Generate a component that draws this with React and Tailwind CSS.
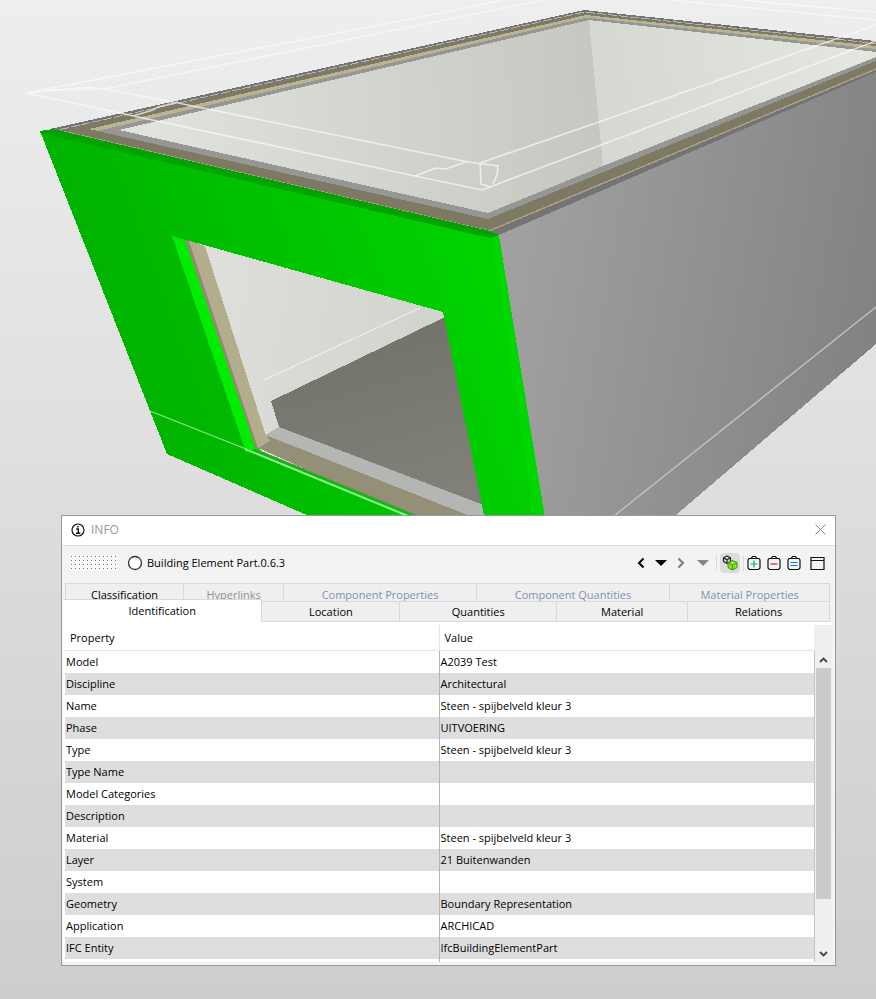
import React, { useState } from 'react'

const backTabs = [
  { label: 'Classification', className: 'grow-[118] text-black' },
  { label: 'Hyperlinks', className: 'grow-[100] text-[#909090]' },
  { label: 'Component Properties', className: 'grow-[193] text-[#7f8fb4]' },
  { label: 'Component Quantities', className: 'grow-[194] text-[#7f8fb4]' },
  { label: 'Material Properties', className: 'grow-[160] text-[#7f8fb4]' },
]

const frontTabs = [
  { label: 'Identification', className: 'grow-[200]' },
  { label: 'Location', className: 'grow-[138]' },
  { label: 'Quantities', className: 'grow-[157]' },
  { label: 'Material', className: 'grow-[131]' },
  { label: 'Relations', className: 'grow-[142]' },
]

const properties = [
  ['Model', 'A2039 Test'],
  ['Discipline', 'Architectural'],
  ['Name', 'Steen - spijbelveld kleur 3'],
  ['Phase', 'UITVOERING'],
  ['Type', 'Steen - spijbelveld kleur 3'],
  ['Type Name', ''],
  ['Model Categories', ''],
  ['Description', ''],
  ['Material', 'Steen - spijbelveld kleur 3'],
  ['Layer', '21 Buitenwanden'],
  ['System', ''],
  ['Geometry', 'Boundary Representation'],
  ['Application', 'ARCHICAD'],
  ['IFC Entity', 'IfcBuildingElementPart'],
  ['', ''],
]

function Scene() {
  return (
    <svg
      className="absolute inset-0 h-full w-full"
      viewBox="0 0 876 999"
      preserveAspectRatio="xMidYMin slice"
      aria-hidden="true"
    >
      <defs>
        <linearGradient id="wallLeft" gradientUnits="userSpaceOnUse" x1="150" y1="120" x2="600" y2="100">
          <stop offset="0" stopColor="#e0e3dc" />
          <stop offset="0.55" stopColor="#d1d3cd" />
          <stop offset="1" stopColor="#c5c7c0" />
        </linearGradient>
        <linearGradient id="wallRight" gradientUnits="userSpaceOnUse" x1="590" y1="100" x2="850" y2="50">
          <stop offset="0" stopColor="#d5d7d1" />
          <stop offset="1" stopColor="#e3e6df" />
        </linearGradient>
        <linearGradient id="sideFace" gradientUnits="userSpaceOnUse" x1="510" y1="300" x2="876" y2="360">
          <stop offset="0" stopColor="#a0a0a0" />
          <stop offset="1" stopColor="#828282" />
        </linearGradient>
        <linearGradient id="frontFace" gradientUnits="userSpaceOnUse" x1="120" y1="380" x2="480" y2="250">
          <stop offset="0" stopColor="#00b200" />
          <stop offset="1" stopColor="#00d200" />
        </linearGradient>
        <linearGradient id="roomWall" gradientUnits="userSpaceOnUse" x1="215" y1="290" x2="440" y2="340">
          <stop offset="0" stopColor="#dedfda" />
          <stop offset="1" stopColor="#d1d3cd" />
        </linearGradient>
        <linearGradient id="roomFloor" gradientUnits="userSpaceOnUse" x1="380" y1="340" x2="420" y2="490">
          <stop offset="0" stopColor="#74746c" />
          <stop offset="1" stopColor="#808078" />
        </linearGradient>
      </defs>

      <g shapeRendering="crispEdges">
        {/* wall layers seen from above, outermost first */}
        <path fill="#747474" d="M50 129 584 10 876 41V72L499 235 489 232Z" />
        <path fill="none" stroke="#b5b5b0" strokeDasharray="9 2" d="M60 129.500 584 12 876 43.500" />
        <path fill="#7d7962" d="M62 130 584 13 876 44V68L489 231Z" />
        <path fill="none" stroke="#aaa081" strokeWidth="1.500" d="M62 131 489 231 876 69" />
        <path fill="#b9b491" d="M89 129 586 15 876 46V54L600 30 120 136Z" />
        <path fill="#969794" d="M97 131 587 17.500 876 49V61L488 219Z" />
        <path fill="url(#wallLeft)" d="M119 130 589 20 603 166 488 213Z" />
        <path fill="url(#wallRight)" d="M589 20 876 52V57L603 166Z" />

        <path fill="url(#sideFace)" d="M499 235 876 72V344L676 515V530H545Z" />

        {/* room behind the opening */}
        <path fill="#00ec00" d="M165 225 195 235 262 455 240 455Z" />
        <path fill="url(#roomWall)" d="M200 235 450 305V325L275 403 281 430 266 437Z" />
        <path fill="url(#roomFloor)" d="M455 312 443 318 271 401 279 427 495 510Z" />
        <path fill="#b4b6b2" d="M264 436 279 427 481 504 490 507V516H468Z" />
        <path fill="#949078" d="M254 446 268 436 470 516H410Z" />

        {/* selected facade */}
        <path
          fill="url(#frontFace)"
          fillRule="evenodd"
          d="M40 131 491 235 499 236 547 530H341L167 454ZM172 236 246 452 256 449 417 515H484L443 312Z"
        />
        <path fill="#00db00" d="M491 237 499 235 547 530H536Z" opacity="0.550" />
        <path fill="#00a300" d="M40 131 53 129 490 231 499 235 490 238 40 133Z" />

        <path fill="#00ec00" d="M172 236 186 240 256 449 246 451Z" />
        <path fill="#938872" d="M185 240 190 241 260 447 256 449Z" />
        <path fill="#b3ad8d" d="M189 241 205 246 266 436 270 441 258 448Z" />
      </g>

      <path stroke="#c4c4c4" strokeWidth="1.300" d="M614 516 876 307" />
      <path stroke="#8c806a" d="M256 449.500 417 515.500" />
      <path stroke="#eef0ec" strokeWidth="1.200" d="M264 380 420 308" />
      <path fill="none" stroke="#8fe08c" strokeWidth="1.300" d="M150 411 246 449" />
      <path fill="none" stroke="#95ee92" strokeWidth="2" d="M245 449 408 516" />

      {/* roof outline drawn as wireframe */}
      <g fill="none" stroke="#fbfbfb" strokeWidth="1.600" opacity="0.700">
        <path d="M26 93 436 14 502 0" />
        <path d="M42 90 104 89 440 21 544 0" />
        <path d="M26 93 89 87 104 89 178 103 468 162 498 166 497 175 493 184" />
        <path d="M26 93 415 176 482 190 876 41" />
        <path d="M876 25 599 122 480 163 481 184 491 187" />
        <path d="M415 176 436 168 446 169 468 161" />
        <path d="M133 116 153 110 158 107 178 102" />
        <path d="M669 0 876 20M738 0 876 12" />
      </g>
    </svg>
  )
}

function BasketIcon({ color, children }) {
  return (
    <svg width="14" height="16" viewBox="0 0 14 16" fill="none" stroke="#111">
      <path strokeWidth="1.200" d="M2 3.500H12L13 5V13L11.500 14.500H2.500L1 13V5ZM4 3.500 5.500 1.500H8.500L10 3.500" />
      <g stroke={color} strokeWidth="1.200">{children}</g>
    </svg>
  )
}

function TitleBar() {
  return (
    <div className="flex h-[30px] items-center justify-between border-b border-[#dcdcdc] bg-white pb-[2px] pl-[9px] pr-2">
      <div className="flex items-center gap-[6px]">
        <svg width="14" height="14" viewBox="0 0 14 14" fill="none" stroke="#111">
          <circle cx="7" cy="7" r="6" strokeWidth="1.200" />
          <path strokeWidth="1.400" d="M5.300 6H7.300V10.300M5 10.300H9.300M6.200 3.700H7.700" />
        </svg>
        <h1 className="text-[12px] text-[#999]">INFO</h1>
      </div>
      <button type="button" aria-label="Close">
        <svg width="13" height="13" viewBox="0 0 13 13" stroke="#888">
          <path d="M1.500 1.500 11.500 11.500M11.500 1.500 1.500 11.500" />
        </svg>
      </button>
    </div>
  )
}

function Toolbar() {
  return (
    <div className="flex h-[37px] items-center justify-between pb-[3px] pl-2 pr-[10px]">
      <div className="flex items-center">
        <svg width="48" height="16" aria-hidden="true">
          <defs>
            <pattern id="grip" width="4" height="4" patternUnits="userSpaceOnUse">
              <rect width="4" height="4" fill="#f8f8f8" />
              <rect x="1" y="1" width="1" height="1" fill="#777" />
            </pattern>
          </defs>
          <rect width="48" height="16" fill="url(#grip)" />
        </svg>
        <svg className="ml-[9px]" width="16" height="16" viewBox="0 0 16 16">
          <circle cx="8" cy="8" r="6.500" fill="#fff" stroke="#333" strokeWidth="1.300" />
        </svg>
        <span className="ml-1 text-[11px]">Building Element Part.0.6.3</span>
      </div>
      <div className="flex items-center">
        <button type="button" aria-label="Previous">
          <svg width="10" height="12" viewBox="0 0 10 12" fill="none" stroke="#000" strokeWidth="2">
            <path d="M7.500 1.500 3 6 7.500 10.500" />
          </svg>
        </button>
        <button type="button" className="ml-[9px]" aria-label="Previous items">
          <svg width="12" height="12" viewBox="0 0 12 12">
            <path d="M0 3H12L6 9Z" />
          </svg>
        </button>
        <button type="button" className="ml-[9px]" aria-label="Next">
          <svg width="10" height="12" viewBox="0 0 10 12" fill="none" stroke="#7a7a7a" strokeWidth="2">
            <path d="M2.500 1.500 7 6 2.500 10.500" />
          </svg>
        </button>
        <button type="button" className="ml-[11px]" aria-label="Next items">
          <svg width="12" height="12" viewBox="0 0 12 12" fill="#858585">
            <path d="M0 3H12L6 9Z" />
          </svg>
        </button>
        <div className="ml-[7px] flex items-center gap-[3px]">
          <div className="h-4 w-px bg-[#dadada]" />
          <button type="button" className="rounded bg-[#dcdcdc] p-[2px]" aria-label="Show components">
            <svg width="16" height="16" viewBox="0 0 16 16" fill="none" strokeLinejoin="round">
              <path stroke="#222" strokeWidth="1.200" d="M5 1 8.500 2.700V6.500L5 8.500 1.500 6.500V2.700ZM1.500 2.700 5 4.700 8.500 2.700M5 4.700V8.500" />
              <path fill="#83e619" stroke="#3f9400" d="M10.500 5.500 15 7.500V12.500L10.500 15 6 12.500V7.500ZM6 7.500 10.500 9.700 15 7.500M10.500 9.700V15" />
            </svg>
          </button>
          <div className="h-4 w-px bg-[#dadada]" />
        </div>
        <div className="ml-[3px] flex gap-[6px]">
          <button type="button" aria-label="Add to selection basket">
            <BasketIcon color="#00b46c"><path d="M3.500 9H10.500M7 5.500V12.500" /></BasketIcon>
          </button>
          <button type="button" aria-label="Remove from selection basket">
            <BasketIcon color="#e01818"><path d="M3.500 9H10.500" /></BasketIcon>
          </button>
          <button type="button" aria-label="Set selection basket">
            <BasketIcon color="#0878e0"><path d="M3.500 7.500H10.500M3.500 10.500H10.500" /></BasketIcon>
          </button>
        </div>
        <button type="button" className="ml-[9px]" aria-label="New window">
          <svg width="15" height="14" viewBox="0 0 15 14" fill="none" stroke="#111">
            <path d="M1 1.500H14V13.500H1ZM1 4.500H14" strokeWidth="1.200" />
          </svg>
        </button>
      </div>
    </div>
  )
}

function Tabs() {
  const [active, setActive] = useState('Identification')

  return (
    <div role="tablist" className="text-[11px] leading-4">
      <div className="ml-[3px] mr-[5px] flex border-l border-[#d9d9d9]">
        {backTabs.map((tab) => (
          <button
            key={tab.label}
            type="button"
            role="tab"
            aria-selected={active === tab.label}
            onClick={() => setActive(tab.label)}
            className={`h-[22px] shrink basis-0 whitespace-nowrap border-r border-t border-[#d9d9d9] bg-[#efefef] ${tab.className}`}
          >
            {tab.label}
          </button>
        ))}
      </div>
      {/* front row covers the lower edge of the back row */}
      <div className="relative -mt-[6px] ml-px mr-[5px] flex items-end">
        {frontTabs.map((tab) => (
          <button
            key={tab.label}
            type="button"
            role="tab"
            aria-selected={active === tab.label}
            onClick={() => setActive(tab.label)}
            className={`shrink basis-0 whitespace-nowrap border-r border-t border-[#d9d9d9] ${tab.className} ${
              active === tab.label ? 'h-[23px] bg-white' : 'h-[21px] border-b bg-[#efefef]'
            }`}
          >
            {tab.label}
          </button>
        ))}
      </div>
    </div>
  )
}

function ScrollBar() {
  return (
    <div className="flex w-[18px] shrink-0 flex-col bg-[#efefef]">
      <div className="h-[26px] shrink-0" />
      <div className="flex grow flex-col border-l border-[#c4c4c4] px-px">
        <button type="button" className="flex h-[17px] items-center justify-center" aria-label="Scroll up">
          <svg width="9" height="6" viewBox="0 0 9 6" fill="none" stroke="#444" strokeWidth="1.800">
            <path d="M1 5 4.500 1.500 8 5" />
          </svg>
        </button>
        <div className="h-[231px] bg-[#cbcbcb]" />
        <div className="grow" />
        <button type="button" className="flex h-[17px] items-center justify-center" aria-label="Scroll down">
          <svg width="9" height="6" viewBox="0 0 9 6" fill="none" stroke="#444" strokeWidth="1.800">
            <path d="M1 1 4.500 4.500 8 1" />
          </svg>
        </button>
      </div>
    </div>
  )
}

function PropertyList() {
  return (
    <div className="mb-[3px] ml-px mr-[3px] bg-white pl-[2px] pt-[3px]">
      <div className="flex h-[337px] overflow-hidden">
        <div className="grow">
          <table className="w-full table-fixed border-separate border-spacing-0 text-left text-[11px] leading-4">
            <thead>
              <tr className="h-[26px]">
                <th className="border-b border-r border-[#e6e6e6] p-0 pl-[5px] font-normal">Property</th>
                <th className="border-b border-[#e6e6e6] p-0 pl-[5px] font-normal">Value</th>
              </tr>
            </thead>
            <tbody>
              {properties.map(([name, value], index) => (
                <tr key={index} className="h-[22px] odd:bg-white even:bg-[#dedede]">
                  <td className="border-r border-[#b4b4b4] p-0 pl-px">{name}</td>
                  <td className="p-0 pl-px">{value}</td>
                </tr>
              ))}
            </tbody>
          </table>
        </div>
        <ScrollBar />
      </div>
    </div>
  )
}

function InfoPanel() {
  return (
    <section className="relative ml-[61px] mr-10 mt-[515px] border border-[#999] bg-[#f3f3f3] text-black">
      <TitleBar />
      <Toolbar />
      <Tabs />
      <PropertyList />
    </section>
  )
}

export default function App() {
  return (
    <main className="relative flow-root min-h-screen overflow-hidden bg-linear-to-b from-[#eeeeee] to-[#cdcdcd] font-['Open_Sans','Noto_Sans',sans-serif]">
      <Scene />
      <InfoPanel />
    </main>
  )
}
